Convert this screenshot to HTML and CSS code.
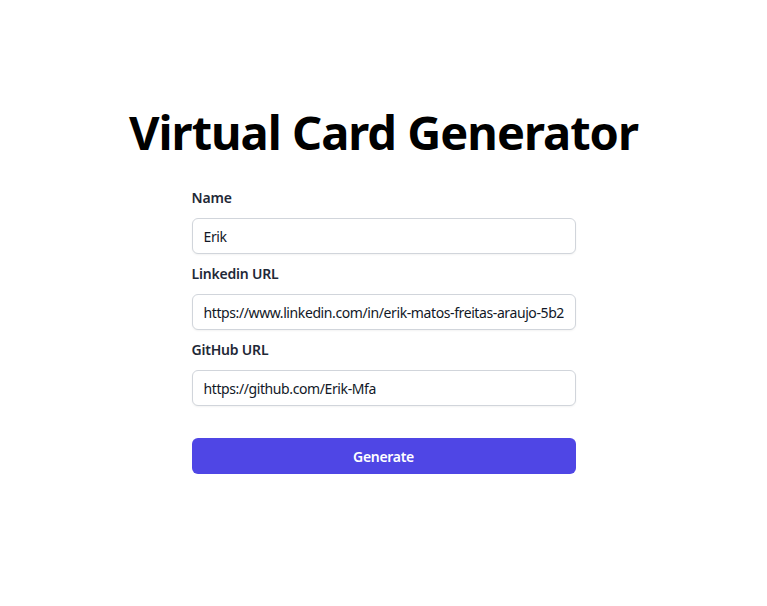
FILE: index.html
```html
<!DOCTYPE html>
<html lang="en">
<head>
<meta charset="utf-8">
<title>Virtual Card Generator</title>
<link rel="stylesheet" href="styles.css">
</head>
<body>
<main class="page">
  <h1 class="title">Virtual Card Generator</h1>
  <form class="form">
    <div class="field">
      <label class="label" for="name">Name</label>
      <input class="input" id="name" type="text" value="Erik">
    </div>
    <div class="field">
      <label class="label" for="linkedin">Linkedin URL</label>
      <input class="input" id="linkedin" type="text" value="https://www.linkedin.com/in/erik-matos-freitas-araujo-5b2">
    </div>
    <div class="field">
      <label class="label" for="github">GitHub URL</label>
      <input class="input" id="github" type="text" value="https://github.com/Erik-Mfa">
    </div>
    <button class="button" type="button">Generate</button>
  </form>
</main>
</body>
</html>
```

FILE: styles.css
```css
* { box-sizing: border-box; }
html, body { margin: 0; padding: 0; background: #fff; }
body {
  font-family: "Noto Sans", "Open Sans", sans-serif;
  color: #111827;
}
.page {
  display: flex;
  flex-direction: column;
  align-items: center;
  padding-top: 104px;
}
.title {
  margin: 0;
  font-size: 47px;
  line-height: 56px;
  font-weight: 700;
  letter-spacing: -1px;
  color: #000;
}
.form {
  width: 384px;
  margin-top: 28px;
  display: flex;
  flex-direction: column;
  gap: 10px;
}
.field {
  display: flex;
  flex-direction: column;
  gap: 10px;
}
.label {
  font-size: 14px;
  line-height: 20px;
  font-weight: 600;
  letter-spacing: -0.2px;
  color: #1f2937;
}
.input {
  height: 36px;
  width: 100%;
  padding: 0 11px;
  border: 1px solid #d1d5db;
  border-radius: 6px;
  font-family: inherit;
  font-size: 14px;
  letter-spacing: -0.4px;
  color: #111827;
  background: #fff;
  box-shadow: 0 1px 2px rgba(0,0,0,0.05);
  outline: none;
}
.button {
  margin-top: 22px;
  height: 36px;
  width: 100%;
  border: none;
  border-radius: 6px;
  background: #4f46e5;
  color: #fff;
  font-family: inherit;
  font-size: 14px;
  font-weight: 600;
  letter-spacing: -0.3px;
  cursor: pointer;
}
```
